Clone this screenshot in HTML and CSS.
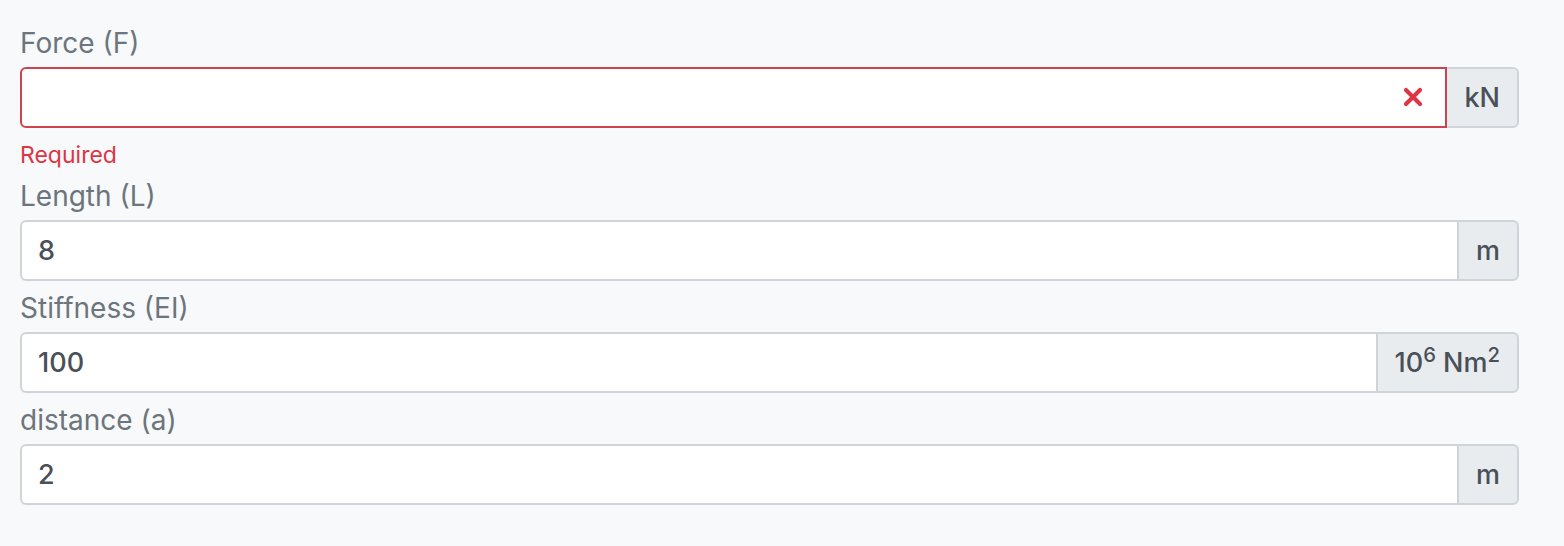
FILE: index.html
```html
<!DOCTYPE html>
<html>
<head>
<meta charset="utf-8">
<link rel="stylesheet" href="styles.css">
</head>
<body>
<div class="form">
  <div class="group">
    <label class="label">Force (F)</label>
    <div class="input-group">
      <div class="field invalid">
        <input class="control" type="text" value="">
        <svg class="x-icon" width="20" height="20" viewBox="0 0 20 20"><path d="M3 3 L17 17 M17 3 L3 17" stroke="#dc3545" stroke-width="4.2" stroke-linecap="round" fill="none"/></svg>
      </div>
      <span class="addon"><span>kN</span></span>
    </div>
    <div class="feedback">Required</div>
  </div>
  <div class="group">
    <label class="label">Length (L)</label>
    <div class="input-group">
      <div class="field"><input class="control" type="text" value="8"></div>
      <span class="addon"><span>m</span></span>
    </div>
  </div>
  <div class="group">
    <label class="label">Stiffness (EI)</label>
    <div class="input-group">
      <div class="field"><input class="control" type="text" value="100"></div>
      <span class="addon"><span>10<sup class="sup">6</sup> Nm<sup class="sup">2</sup></span></span>
    </div>
  </div>
  <div class="group">
    <label class="label">distance (a)</label>
    <div class="input-group">
      <div class="field"><input class="control" type="text" value="2"></div>
      <span class="addon"><span>m</span></span>
    </div>
  </div>
</div>
</body>
</html>
```
FILE: styles.css
```css
html, body {
  margin: 0;
  padding: 0;
  background: #f8f9fa;
  font-family: Inter, "Open Sans", "DejaVu Sans", sans-serif;
}
.form {
  width: 1499px;
  margin-left: 20px;
  padding-top: 16px;
}
.group {
  display: flex;
  flex-direction: column;
}
.label {
  display: block;
  font-size: 28px;
  line-height: 32px;
  color: #6c757d;
  margin-top: 11px;
  margin-bottom: 8px;
}
.input-group {
  display: flex;
  align-items: stretch;
  height: 61px;
}
.field {
  position: relative;
  flex: 1 1 auto;
  display: flex;
  z-index: 1;
}
.control {
  flex: 1 1 auto;
  min-width: 0;
  box-sizing: border-box;
  height: 61px;
  margin: 0;
  padding: 8px 16px;
  border: 2px solid #ced4da;
  border-radius: 6px 0 0 6px;
  background: #fff;
  font-family: inherit;
  font-size: 27px;
  font-weight: 500;
  color: #495057;
  outline: none;
}
.field.invalid .control {
  border-color: #d0434c;
  padding-right: 60px;
}
.x-icon {
  position: absolute;
  right: 24px;
  top: 20px;
}
.addon {
  display: flex;
  align-items: center;
  box-sizing: border-box;
  padding: 0 17px;
  margin-left: -2px;
  background: #e9ecef;
  border: 2px solid #ced4da;
  border-radius: 0 6px 6px 0;
  font-size: 27px;
  font-weight: 500;
  color: #495057;
  white-space: nowrap;
}
.sup {
  font-size: 75%;
  line-height: 0;
  position: relative;
  top: -0.5em;
  vertical-align: baseline;
}
.feedback {
  margin-top: 12px;
  margin-bottom: -1px;
  font-size: 23px;
  line-height: 30px;
  color: #dc3545;
}
```
